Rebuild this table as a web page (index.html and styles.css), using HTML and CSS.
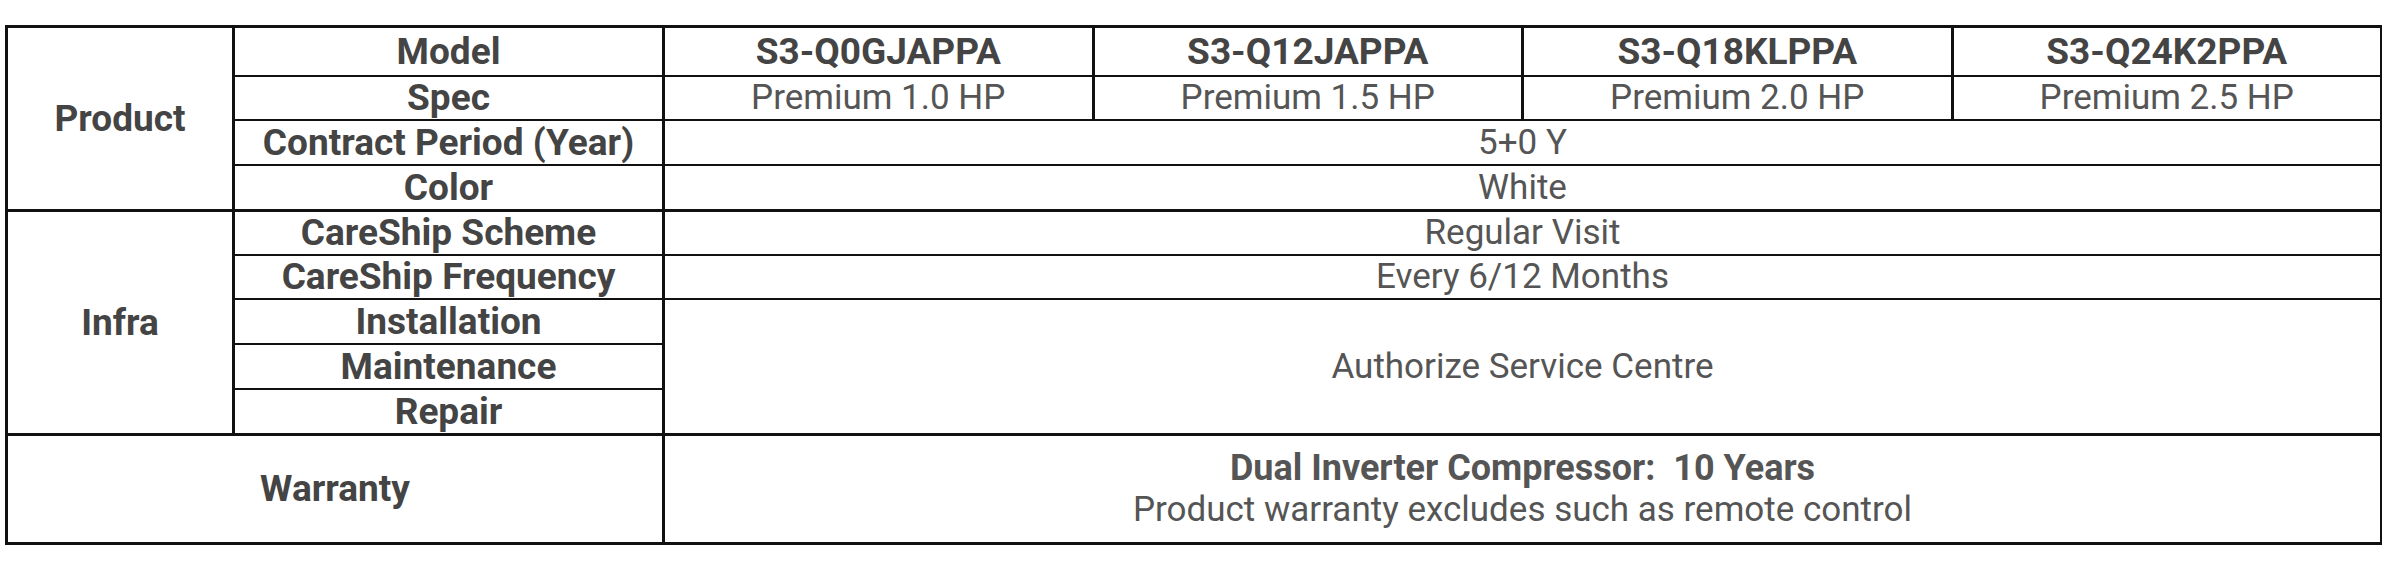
FILE: index.html
```html
<!DOCTYPE html>
<html lang="en">
<head>
<meta charset="utf-8">
<title>Product spec</title>
<link rel="stylesheet" href="styles.css">
</head>
<body>
<table class="spec">
  <colgroup>
    <col class="c-group">
    <col class="c-label">
    <col class="c-model">
    <col class="c-model">
    <col class="c-model">
    <col class="c-model">
  </colgroup>
  <tbody>
    <tr class="r-first">
      <th class="group" rowspan="4">Product</th>
      <th class="label">Model</th>
      <td class="model">S3-Q0GJAPPA</td>
      <td class="model">S3-Q12JAPPA</td>
      <td class="model">S3-Q18KLPPA</td>
      <td class="model">S3-Q24K2PPA</td>
    </tr>
    <tr class="r-s">
      <th class="label">Spec</th>
      <td>Premium 1.0 HP</td>
      <td>Premium 1.5 HP</td>
      <td>Premium 2.0 HP</td>
      <td>Premium 2.5 HP</td>
    </tr>
    <tr class="r-t">
      <th class="label">Contract Period (Year)</th>
      <td colspan="4">5+0 Y</td>
    </tr>
    <tr class="r-t">
      <th class="label">Color</th>
      <td colspan="4">White</td>
    </tr>
    <tr class="r-s r-section">
      <th class="group" rowspan="5">Infra</th>
      <th class="label">CareShip Scheme</th>
      <td colspan="4">Regular Visit</td>
    </tr>
    <tr class="r-s">
      <th class="label">CareShip Frequency</th>
      <td colspan="4">Every 6/12 Months</td>
    </tr>
    <tr class="r-t">
      <th class="label">Installation</th>
      <td colspan="4" rowspan="3">Authorize Service Centre</td>
    </tr>
    <tr class="r-t">
      <th class="label">Maintenance</th>
    </tr>
    <tr class="r-t">
      <th class="label">Repair</th>
    </tr>
    <tr class="r-warranty">
      <th class="group" colspan="2">Warranty</th>
      <td colspan="4">
        <div class="w-main">Dual Inverter Compressor:&nbsp; 10 Years</div>
        <div class="w-sub">Product warranty excludes such as remote control</div>
      </td>
    </tr>
  </tbody>
</table>
</body>
</html>
```

FILE: styles.css
```css
html, body {
  margin: 0;
  padding: 0;
  background: #ffffff;
}

body {
  padding: 25px 0 0 5px;
  font-family: Roboto, "Liberation Sans", sans-serif;
}

.spec {
  border-collapse: collapse;
  table-layout: fixed;
  width: 2375px;
  border: 3px solid #111;
}

.c-group { width: 227px; }
.c-label { width: 430px; }
.c-model { width: 429.5px; }

.spec th,
.spec td {
  border-top: 2px solid #111;
  border-bottom: 2px solid #111;
  border-left: 3px solid #111;
  border-right: 3px solid #111;
  padding: 0;
  text-align: center;
  vertical-align: middle;
  font-size: 35px;
  line-height: 40px;
  color: #555;
  font-weight: 400;
  white-space: nowrap;
}

.spec th {
  color: #444;
  font-weight: 700;
  font-size: 37px;
}

.spec td.model {
  color: #444;
  font-weight: 700;
  font-size: 37px;
}

.r-first th,
.r-first td {
  height: 47px;
}

.r-s th,
.r-s td {
  height: 42px;
}

.r-t th,
.r-t td {
  height: 43px;
}

.r-section th,
.r-section td,
.r-warranty th,
.r-warranty td {
  border-top-width: 3px;
}

.r-warranty th,
.r-warranty td {
  height: 106px;
}

.w-main {
  font-weight: 700;
  font-size: 36px;
  color: #555;
  line-height: 42px;
}

.w-sub {
  color: #555;
  line-height: 42px;
}
```
